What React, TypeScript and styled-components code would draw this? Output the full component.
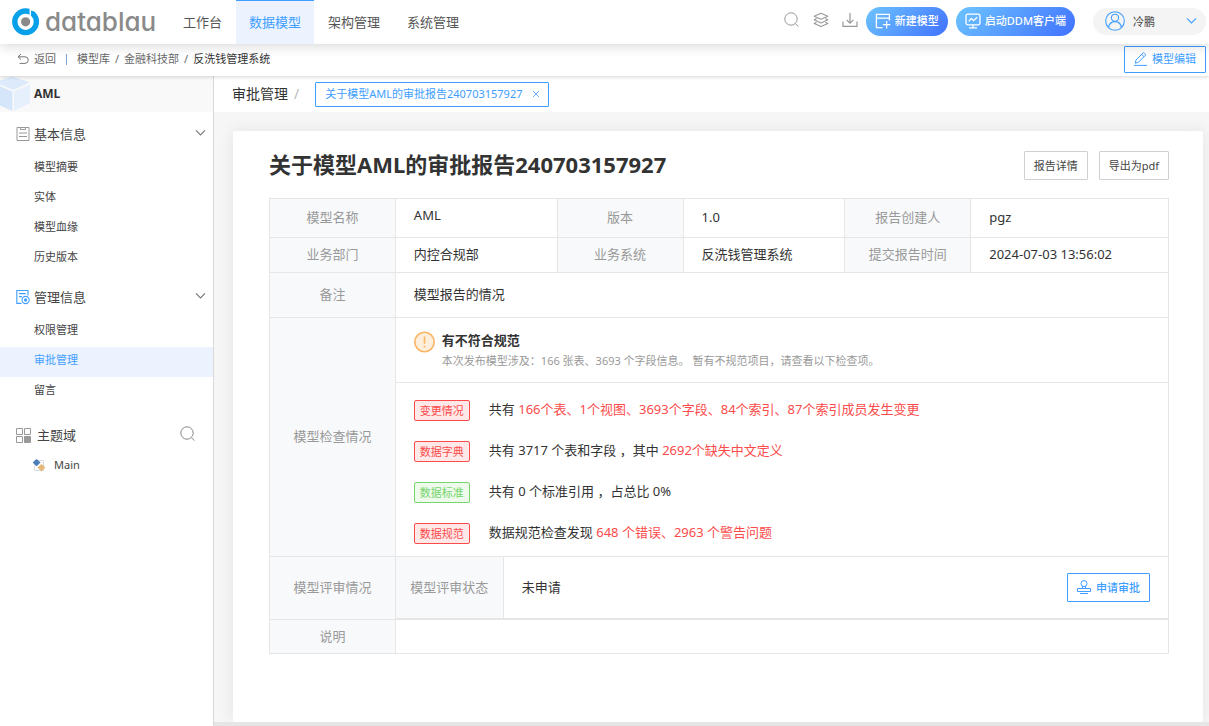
import React from 'react';
import styled, { createGlobalStyle, css } from 'styled-components';

const BLUE = '#409eff';
const RED = '#fb4b4b';
const LINE = '#e6e6e6';

const GlobalStyle = createGlobalStyle`
  * { box-sizing: border-box; }
  body {
    margin: 0;
    background: #fff;
    color: #333;
    font-family: "Noto Sans", "Noto Sans CJK SC", sans-serif;
    font-size: 13px;
    line-height: 20px;
  }
  button { font-family: inherit; cursor: pointer; margin: 0; }
  a { color: inherit; text-decoration: none; }
  svg { display: block; flex: none; fill: none; }
`;

const Page = styled.div`
  min-height: 100vh;
  display: flex;
  flex-direction: column;
`;

/* ---------- top bar ---------- */

const TopBar = styled.header`
  position: relative;
  z-index: 2;
  display: flex;
  align-items: stretch;
  height: 44px;
  padding: 0 3px 0 12px;
  background: #fff;
  box-shadow: 0 2px 12px rgba(0, 0, 0, 0.16);
`;

const Brand = styled.a`
  display: flex;
  align-items: center;
  gap: 5px;
  width: 158px;
`;

const Wordmark = styled.span`
  font-family: Inter, sans-serif;
  font-feature-settings: "cv11";
  font-size: 26px;
  line-height: 32px;
  font-weight: 500;
  color: #8a8a8a;
`;

const Nav = styled.nav`
  display: flex;
  gap: 1px;
`;

const NavLink = styled.a<{ $active?: boolean }>`
  display: flex;
  align-items: center;
  padding: 0 13px 2px;
  color: #555;
  border-top: 1px solid transparent;
  ${(p) =>
    p.$active &&
    css`
      color: ${BLUE};
      background: #ecf3ff;
      border-top-color: ${BLUE};
    `}
`;

const Tools = styled.div`
  display: flex;
  align-items: center;
  margin-left: auto;
  padding-bottom: 2px;
`;

const IconButton = styled.button`
  display: flex;
  padding: 0 0 2px;
  margin-right: 13px;
  border: 0;
  background: none;
  color: #999;
`;

const PillButton = styled.button`
  display: flex;
  align-items: center;
  gap: 4px;
  height: 29px;
  padding: 0 9px;
  margin-right: 8px;
  border: 0;
  border-radius: 15px;
  color: #fff;
  font-size: 11px;
  line-height: 16px;
  font-weight: 500;
  background: linear-gradient(135deg, #6cc4ff 0%, #4171ff 100%);
`;

const PillGroup = styled.div`
  display: flex;
  margin-left: -5px;
`;

const UserMenu = styled.button`
  display: flex;
  align-items: center;
  gap: 8px;
  width: 113px;
  height: 27px;
  margin-left: 10px;
  padding: 0 9px 0 12px;
  border: 0;
  border-radius: 14px;
  background: #f4f4f4;
  color: #444;
  font-size: 11px;

  svg:last-child { margin-left: auto; }
`;

/* ---------- path bar ---------- */

const PathBar = styled.div`
  position: relative;
  z-index: 1;
  display: flex;
  align-items: center;
  height: 32px;
  padding: 0 3px 2px 17px;
  background: #fff;
  font-size: 11px;
  color: #666;
  box-shadow: 0 1px 4px rgba(0, 0, 0, 0.16);
`;

const BackLink = styled.a`
  display: flex;
  align-items: center;
  gap: 5px;
  padding-right: 10px;
`;

const Crumbs = styled.ol`
  display: flex;
  gap: 5px;
  margin: 0;
  padding: 0;
  list-style: none;
`;

const Divider = styled.span`
  width: 1px;
  height: 11px;
  margin-right: 10px;
  background: #7ea3cc;
`;

const Current = styled.span`
  color: #333;
`;

const OutlineButton = styled.button<{ $blue?: boolean }>`
  display: flex;
  align-items: center;
  justify-content: center;
  gap: 5px;
  height: 29px;
  padding: 0 9px;
  border: 1px solid ${(p) => (p.$blue ? BLUE : '#d0d0d0')};
  border-radius: 1px;
  background: #fff;
  color: ${(p) => (p.$blue ? BLUE : '#444')};
  font-size: 11px;
  line-height: 16px;
`;

const EditButton = styled(OutlineButton)`
  height: 27px;
  margin-left: auto;
`;

/* ---------- body ---------- */

const Body = styled.div`
  flex: 1;
  display: flex;
`;

const Sidebar = styled.aside`
  flex: none;
  width: 214px;
  border-right: 1px solid #d9d9d9;
`;

const ModelHead = styled.div`
  display: flex;
  align-items: center;
  gap: 4px;
  height: 36px;
  margin-bottom: 2px;
  background: #f9f9f9;
  font-weight: 700;
  font-size: 12px;
`;

const Group = styled.section`
  margin-bottom: 3px;
`;

const GroupHead = styled.h2<{ $wide?: boolean }>`
  display: flex;
  align-items: center;
  gap: ${(p) => (p.$wide ? 6 : 4)}px;
  height: 40px;
  margin: 0;
  padding: 0 ${(p) => (p.$wide ? 17 : 7)}px 0 16px;
  font-size: 13px;
  font-weight: 400;
  color: #444;
`;

const HeadButton = styled.button`
  display: flex;
  margin-left: auto;
  padding: 0 0 3px;
  border: 0;
  background: none;
  color: #888;
`;

const SideLink = styled.a<{ $active?: boolean }>`
  display: flex;
  align-items: center;
  gap: 8px;
  height: 30px;
  padding: 0 0 4px 34px;
  font-size: 11px;
  color: ${(p) => (p.$active ? BLUE : '#444')};
  background: ${(p) => (p.$active ? '#ecf3ff' : 'transparent')};
`;

const TopicGroup = styled(Group)`
  margin-top: 8px;
`;

const TopicLink = styled.a`
  display: flex;
  align-items: center;
  gap: 8px;
  height: 20px;
  padding-left: 32px;
  font-size: 11px;
  color: #444;
`;

const Main = styled.main`
  flex: 1;
  min-width: 0;
  display: flex;
  flex-direction: column;
  background: #f6f6f6;
`;

const TabBar = styled.div`
  display: flex;
  align-items: center;
  height: 36px;
  padding-left: 18px;
  background: #fff;
  font-size: 14px;
`;

const Slash = styled.span`
  padding: 0 16px 0 6px;
  color: #bbb;
`;

const Tab = styled.div`
  display: flex;
  align-items: center;
  gap: 8px;
  height: 25px;
  padding: 0 7px 0 9px;
  border: 1px solid ${BLUE};
  border-radius: 1px;
  color: ${BLUE};
  font-size: 11px;
`;

const CloseButton = styled.button`
  display: flex;
  padding: 0;
  border: 0;
  background: none;
  color: ${BLUE};
`;

const Scroller = styled.div`
  flex: 1;
  display: flex;
  padding: 19px 6px 0 19px;
`;

const Card = styled.article`
  flex: 1;
  min-width: 0;
  padding: 20px 34px 0 36px;
  border-radius: 2px;
  background: #fff;
  box-shadow: 0 0 16px rgba(0, 0, 0, 0.08);
`;

const ScrollTrack = styled.div`
  position: relative;
  height: 4px;
  background: #e6e6e6;
`;

const CardHead = styled.div`
  display: flex;
  align-items: flex-start;
  gap: 11px;
  margin-bottom: 18px;
`;

const Title = styled.h1`
  flex: 1;
  margin: 0;
  font-size: 22px;
  line-height: 27px;
  font-weight: 700;
`;

/* ---------- report table ---------- */

const Report = styled.table`
  width: 100%;
  table-layout: fixed;
  border-collapse: collapse;
`;

const Label = styled.th`
  padding: 0 0 2px;
  border: 1px solid ${LINE};
  background: #f8f9fb;
  color: #999;
  font-weight: 400;
  text-align: center;
`;

const Value = styled.td<{ $raised?: boolean }>`
  padding: 0 18px 2px;
  border: 1px solid ${LINE};
  ${(p) =>
    p.$raised &&
    css`
      vertical-align: top;
      line-height: 32px;
    `}
`;

const PanelCell = styled(Value)`
  padding: 0;
`;

const Row = styled.tr<{ $h: number }>`
  height: ${(p) => p.$h}px;
`;

const Summary = styled.div`
  display: flex;
  gap: 7px;
  height: 65px;
  padding: 13px 18px 0;
  border-bottom: 1px solid ${LINE};
`;

const SummaryTitle = styled.h3`
  margin: 0;
  font-size: 13px;
  line-height: 19px;
  font-weight: 700;
`;

const SummaryNote = styled.p`
  margin: 0;
  font-size: 11px;
  line-height: 22px;
  color: #999;
`;

const Checks = styled.ul`
  display: flex;
  flex-direction: column;
  gap: 20px;
  margin: 0;
  padding: 17px 18px 12px;
  list-style: none;
`;

const Check = styled.li`
  display: flex;
  align-items: flex-start;
  gap: 19px;
  line-height: 19px;
`;

const Tag = styled.span<{ $ok?: boolean }>`
  width: 56px;
  height: 21px;
  border: 1px solid ${(p) => (p.$ok ? '#76d56b' : RED)};
  border-radius: 2px;
  background: ${(p) => (p.$ok ? '#eefaec' : '#ffe8e8')};
  color: ${(p) => (p.$ok ? '#76d56b' : RED)};
  font-size: 11px;
  line-height: 20px;
  text-align: center;
`;

const Alert = styled.span`
  color: ${RED};
`;

const Review = styled.div`
  display: flex;
  align-items: center;
  height: 62px;
  padding-right: 18px;
  border-bottom: 1px solid ${LINE};
`;

const ReviewLabel = styled.div`
  display: flex;
  align-items: center;
  justify-content: center;
  align-self: stretch;
  width: 108px;
  padding-bottom: 2px;
  border-right: 1px solid ${LINE};
  background: #f8f9fb;
  color: #999;
`;

const ReviewState = styled.div`
  flex: 1;
  padding: 0 0 2px 18px;
`;

const ApplyButton = styled(OutlineButton)`
  font-weight: 500;
`;

/* ---------- icons ---------- */

const LogoMark = () => (
  <svg width="28" height="28" viewBox="0 0 28 28">
    <circle cx="13.6" cy="13.8" r="10.8" stroke="#08a0e9" strokeWidth="5.4" />
    <path d="M18.3 0V7.6" stroke="#fff" strokeWidth="1.5" />
    <path d="M19 0H23V3.4L19 2.6Z" fill="#fff" />
    <circle cx="13.6" cy="13.8" r="4.6" fill="#8a8a8a" />
  </svg>
);

const SearchIcon = () => (
  <svg width="16" height="16" viewBox="0 0 16 16" stroke="currentColor" strokeWidth="1">
    <circle cx="7" cy="7" r="6.2" />
    <path d="M11.4 11.6L14.4 14.6" />
  </svg>
);

const LayersIcon = () => (
  <svg width="16" height="16" viewBox="0 0 16 16" stroke="currentColor" strokeWidth="1.1" strokeLinejoin="round">
    <path d="M8 1.2L14.8 4.2L8 7.2L1.2 4.2Z" />
    <path d="M3.6 6.6L1.2 7.8L8 10.9L14.8 7.8L12.4 6.6" />
    <path d="M3.6 10.2L1.2 11.4L8 14.6L14.8 11.4L12.4 10.2" />
  </svg>
);

const DownloadIcon = () => (
  <svg width="16" height="16" viewBox="0 0 16 16" stroke="currentColor" strokeWidth="1.2">
    <path d="M8 1V11M4.6 7.8L8 11.2L11.4 7.8" />
    <path d="M1 9.5V14.4H15V9.5" />
  </svg>
);

const NewModelIcon = () => (
  <svg width="16" height="16" viewBox="0 0 16 16" stroke="currentColor" strokeWidth="1.3">
    <path d="M7.5 14.6H1.4V1.4H14.4V7.4M1.4 5.2H14.4" />
    <path d="M11.6 8V15.4M7.9 11.7H15.3" />
  </svg>
);

const MonitorIcon = () => (
  <svg width="16" height="16" viewBox="0 0 16 16" stroke="currentColor" strokeWidth="1.3">
    <rect x="1" y="1.2" width="14" height="10.6" rx="1.8" />
    <path d="M3.8 8.4L6.2 5.4L8.6 7.6L12.2 4.2M8 12V14.6M4 14.9H12" />
  </svg>
);

const UserIcon = () => (
  <svg width="20" height="20" viewBox="0 0 20 20" stroke={BLUE} strokeWidth="1.1">
    <circle cx="10" cy="10" r="9.3" />
    <circle cx="10" cy="6.8" r="3.6" />
    <path d="M3.6 16.6C4.2 12.6 6.6 10.6 10 10.6S15.8 12.6 16.4 16.6" />
  </svg>
);

const ChevronIcon = ({ color = '#777' }: { color?: string }) => (
  <svg width="11" height="8" viewBox="0 0 11 8" stroke={color} strokeWidth="1.1">
    <path d="M1 1.4L5.5 6L10 1.4" />
  </svg>
);

const BackIcon = () => (
  <svg width="12" height="12" viewBox="0 0 12 12" stroke="#777" strokeWidth="1">
    <path d="M4 1L1 3.8L4 6.6M1 3.8H8A3.2 3.2 0 0 1 8 10.4H2.6" />
  </svg>
);

const PencilIcon = () => (
  <svg width="13" height="14" viewBox="0 0 13 14" stroke="currentColor" strokeWidth="1">
    <path d="M1.2 11.2L2 8L8.8 1.2A1 1 0 0 1 10.3 1.2L11.2 2.1A1 1 0 0 1 11.2 3.5L4.4 10.3ZM7.7 2.4L10 4.7" />
    <path d="M0 13.4H13" />
  </svg>
);

const CubeIcon = () => (
  <svg width="30" height="36" viewBox="0 0 30 36">
    <path d="M0 4.6L12.6 0.4L29.4 6.2L13.6 14L0 8.6Z" fill="#dceafb" />
    <path d="M0 10.2L12.4 15.6V35L0 29.6Z" fill="#d6e6fa" />
    <path d="M14 15.6L30 8.2V27L14 35Z" fill="#e6f0fd" />
  </svg>
);

const ClipboardIcon = () => (
  <svg width="14" height="16" viewBox="0 0 14 16" stroke="#999" strokeWidth="1">
    <path d="M1 1.5H13V14.5H1Z" />
    <path d="M4.5 1.5V3.5H9.5V1.5M3 7H11M3 10.5H11" />
  </svg>
);

const ManageIcon = () => (
  <svg width="14" height="16" viewBox="0 0 14 16" stroke={BLUE} strokeWidth="1.1">
    <path d="M5.5 14.4H0.8V1.5H12V6.4M3 4.6H9.8M3 7.6H6" />
    <circle cx="9.6" cy="11" r="3.6" />
    <circle cx="9.6" cy="11" r="1.1" fill={BLUE} />
  </svg>
);

const GridIcon = () => (
  <svg width="15" height="15" viewBox="0 0 15 15" stroke="#999" strokeWidth="1">
    <path d="M0.5 0.5H6.5V6.5H0.5ZM8.5 0.5H14.5V6.5H8.5ZM0.5 8.5H6.5V14.5H0.5Z" />
    <path d="M8.5 8.5H14.5V14.5H8.5Z" fill="#999" />
  </svg>
);

const TopicIcon = () => (
  <svg width="14" height="13" viewBox="0 0 14 13">
    <path d="M2.5 1.5H11.5V11.5H2.5Z" stroke="#d8dde4" />
    <path d="M4.6 0L8.6 3.6L4.6 7.2L0.6 3.6Z" fill="#4a7fb8" />
    <path d="M9.4 5L13.4 8.6L9.4 12.4L5.6 8.6Z" fill="#e6b878" />
  </svg>
);

const CloseIcon = () => (
  <svg width="10" height="10" viewBox="0 0 10 10" stroke="currentColor" strokeWidth="0.8">
    <path d="M2 2L8 8M8 2L2 8" />
  </svg>
);

const WarningIcon = () => (
  <svg width="21" height="22" viewBox="0 0 21 22">
    <circle cx="10.5" cy="11" r="9.7" fill="#feefdc" stroke="#fbb566" strokeWidth="1.6" />
    <path d="M10.5 5.4V12.8M10.5 14.8V16.4" stroke="#fbb566" strokeWidth="1.7" />
  </svg>
);

const StampIcon = () => (
  <svg width="14" height="15" viewBox="0 0 14 15" stroke="currentColor" strokeWidth="1">
    <circle cx="7" cy="3.6" r="3" />
    <path d="M5.5 6.2V8.5M8.5 6.2V8.5M0.5 8.5H13.5V11.5H0.5ZM3 13.5H11" />
  </svg>
);

/* ---------- data ---------- */

const navItems = ['工作台', '数据模型', '架构管理', '系统管理'];
const basicItems = ['模型摘要', '实体', '模型血缘', '历史版本'];
const manageItems = ['权限管理', '审批管理', '留言'];
const columns = ['14%', '18%', '14%', '18%', '14%', '22%'];
const reportName = '关于模型AML的审批报告240703157927';

const checks = [
  { tag: '变更情况', text: '共有 ', alert: '166个表、1个视图、3693个字段、84个索引、87个索引成员发生变更' },
  { tag: '数据字典', text: '共有 3717 个表和字段 ，其中 ', alert: '2692个缺失中文定义' },
  { tag: '数据标准', text: '共有 0 个标准引用 ，占总比 0%', ok: true },
  { tag: '数据规范', text: '数据规范检查发现 ', alert: '648 个错误、2963 个警告问题' },
];

export default function App() {
  return (
    <Page>
      <GlobalStyle />
      <TopBar>
        <Brand href="#">
          <LogoMark />
          <Wordmark>datablau</Wordmark>
        </Brand>
        <Nav>
          {navItems.map((name) => (
            <NavLink key={name} href="#" $active={name === '数据模型'}>
              {name}
            </NavLink>
          ))}
        </Nav>
        <Tools>
          <IconButton aria-label="搜索"><SearchIcon /></IconButton>
          <IconButton aria-label="图层"><LayersIcon /></IconButton>
          <IconButton aria-label="下载"><DownloadIcon /></IconButton>
          <PillGroup>
            <PillButton><NewModelIcon />新建模型</PillButton>
            <PillButton><MonitorIcon />启动DDM客户端</PillButton>
          </PillGroup>
          <UserMenu>
            <UserIcon />
            冷鹏
            <ChevronIcon color={BLUE} />
          </UserMenu>
        </Tools>
      </TopBar>

      <PathBar>
        <BackLink href="#"><BackIcon />返回</BackLink>
        <Divider />
        <Crumbs>
          <li><a href="#">模型库</a></li>
          <li aria-hidden="true">/</li>
          <li><a href="#">金融科技部</a></li>
          <li aria-hidden="true">/</li>
          <li><Current>反洗钱管理系统</Current></li>
        </Crumbs>
        <EditButton $blue><PencilIcon />模型编辑</EditButton>
      </PathBar>

      <Body>
        <Sidebar>
          <ModelHead><CubeIcon />AML</ModelHead>
          <Group>
            <GroupHead>
              <ClipboardIcon />
              基本信息
              <HeadButton aria-label="收起基本信息"><ChevronIcon /></HeadButton>
            </GroupHead>
            {basicItems.map((name) => (
              <SideLink key={name} href="#">{name}</SideLink>
            ))}
          </Group>
          <Group>
            <GroupHead>
              <ManageIcon />
              管理信息
              <HeadButton aria-label="收起管理信息"><ChevronIcon /></HeadButton>
            </GroupHead>
            {manageItems.map((name) => (
              <SideLink key={name} href="#" $active={name === '审批管理'}>{name}</SideLink>
            ))}
          </Group>
          <TopicGroup>
            <GroupHead $wide>
              <GridIcon />
              主题域
              <HeadButton aria-label="搜索主题域"><SearchIcon /></HeadButton>
            </GroupHead>
            <TopicLink href="#"><TopicIcon />Main</TopicLink>
          </TopicGroup>
        </Sidebar>

        <Main>
          <TabBar>
            审批管理
            <Slash>/</Slash>
            <Tab>
              {reportName}
              <CloseButton aria-label="关闭"><CloseIcon /></CloseButton>
            </Tab>
          </TabBar>
          <Scroller>
            <Card>
              <CardHead>
                <Title>{reportName}</Title>
                <OutlineButton>报告详情</OutlineButton>
                <OutlineButton>导出为pdf</OutlineButton>
              </CardHead>
              <Report>
                <colgroup>
                  {columns.map((width, i) => (
                    <col key={i} width={width} />
                  ))}
                </colgroup>
                <tbody>
                  <Row $h={39}>
                    <Label scope="row">模型名称</Label>
                    <Value $raised>AML</Value>
                    <Label scope="row">版本</Label>
                    <Value>1.0</Value>
                    <Label scope="row">报告创建人</Label>
                    <Value>pgz</Value>
                  </Row>
                  <Row $h={35}>
                    <Label scope="row">业务部门</Label>
                    <Value>内控合规部</Value>
                    <Label scope="row">业务系统</Label>
                    <Value>反洗钱管理系统</Value>
                    <Label scope="row">提交报告时间</Label>
                    <Value>2024-07-03 13:56:02</Value>
                  </Row>
                  <Row $h={45}>
                    <Label scope="row">备注</Label>
                    <Value colSpan={5}>模型报告的情况</Value>
                  </Row>
                  <Row $h={239}>
                    <Label scope="row">模型检查情况</Label>
                    <PanelCell colSpan={5}>
                      <Summary>
                        <WarningIcon />
                        <div>
                          <SummaryTitle>有不符合规范</SummaryTitle>
                          <SummaryNote>
                            本次发布模型涉及：166 张表、3693 个字段信息。 暂有不规范项目，请查看以下检查项。
                          </SummaryNote>
                        </div>
                      </Summary>
                      <Checks>
                        {checks.map((c) => (
                          <Check key={c.tag}>
                            <Tag $ok={c.ok}>{c.tag}</Tag>
                            <span>
                              {c.text}
                              {c.alert && <Alert>{c.alert}</Alert>}
                            </span>
                          </Check>
                        ))}
                      </Checks>
                    </PanelCell>
                  </Row>
                  <Row $h={63}>
                    <Label scope="row">模型评审情况</Label>
                    <PanelCell colSpan={5}>
                      <Review>
                        <ReviewLabel>模型评审状态</ReviewLabel>
                        <ReviewState>未申请</ReviewState>
                        <ApplyButton $blue><StampIcon />申请审批</ApplyButton>
                      </Review>
                    </PanelCell>
                  </Row>
                  <Row $h={34}>
                    <Label scope="row">说明</Label>
                    <Value colSpan={5} />
                  </Row>
                </tbody>
              </Report>
            </Card>
          </Scroller>
          <ScrollTrack />
        </Main>
      </Body>
    </Page>
  );
}
